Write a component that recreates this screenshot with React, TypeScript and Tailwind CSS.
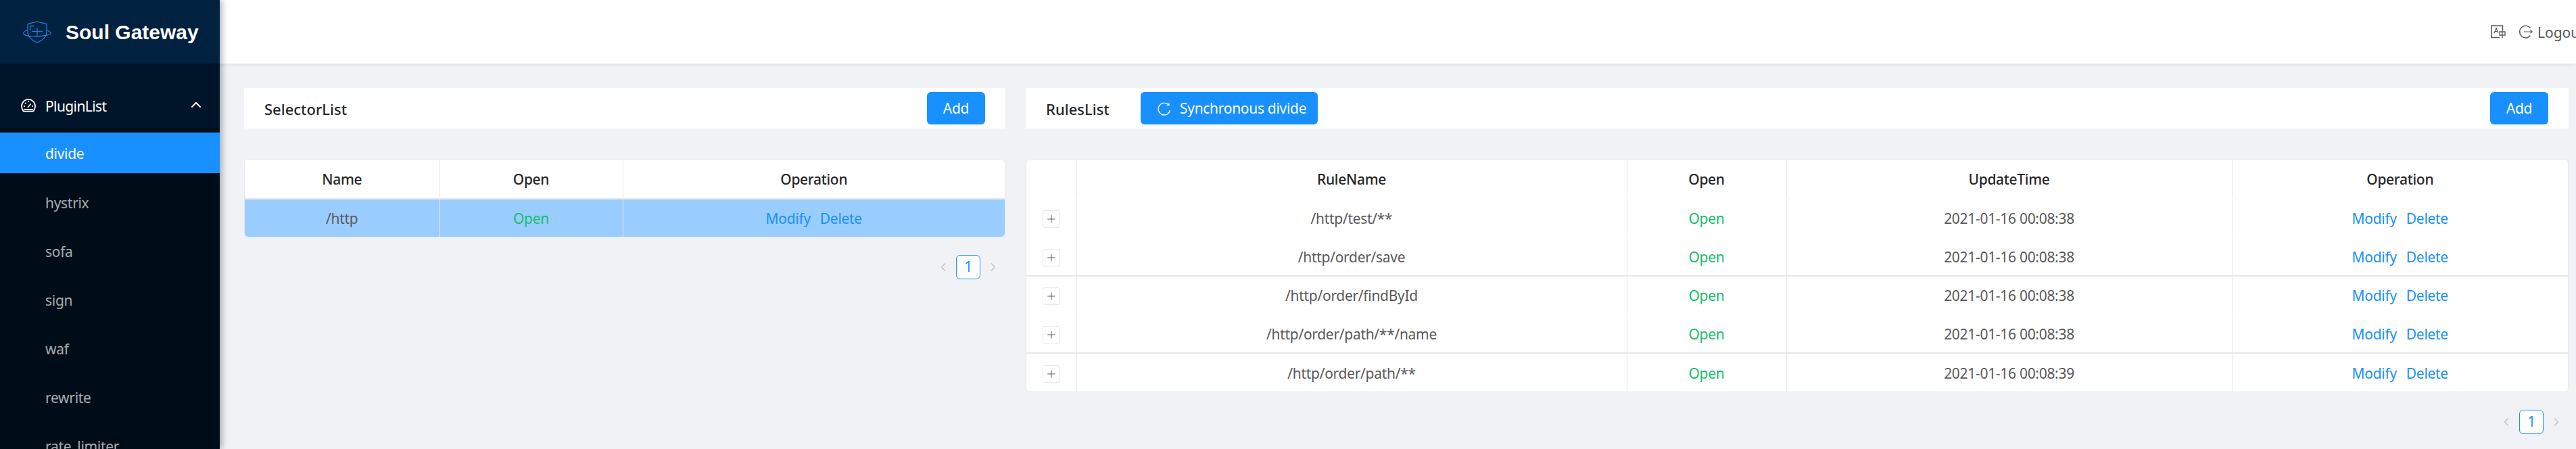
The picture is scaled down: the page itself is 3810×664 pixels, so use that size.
import { ReactNode } from 'react';
import { ChevronLeft, ChevronRight, ChevronUp, Plus } from 'lucide-react';

const plugins = ['hystrix', 'sofa', 'sign', 'waf', 'rewrite', 'rate_limiter'];

const rules = [
  { name: '/http/test/**', time: '2021-01-16 00:08:38', line: false },
  { name: '/http/order/save', time: '2021-01-16 00:08:38', line: true },
  { name: '/http/order/findById', time: '2021-01-16 00:08:38', line: false },
  { name: '/http/order/path/**/name', time: '2021-01-16 00:08:38', line: true },
  { name: '/http/order/path/**', time: '2021-01-16 00:08:39', line: false },
];

function Logo() {
  return (
    <svg width="42" height="33" viewBox="0 0 42 33" fill="none" stroke="#1a7fd8" strokeWidth="1.3" className="shrink-0">
      <path d="M21 .8 L35 4.5 V16 C35 24 28 29 21 32 C14 29 7 24 7 16 V4.5 Z" />
      <path d="M7 13 C2.5 15 .5 16.5 .7 18 C1.5 22 12 24 22 23 C33 22 41.5 20.5 41.3 18 C41 16.5 38.5 15 35 13.5" />
      <path d="M10.5 14 V7.5 H16.5 M21 10 V22 M13 15.5 H29" />
    </svg>
  );
}

function DashboardIcon() {
  return (
    <svg width="22" height="20" viewBox="0 0 22 20" fill="none" stroke="white" strokeWidth="1.7" className="shrink-0">
      <path d="M4 18.6 H18 C20 16.5 21 14 21 11 A10 10 0 0 0 1 11 C1 14 2 16.5 4 18.6 Z" />
      <path d="M11 3 V5 M4 11 H6 M16 11 H18 M6 6 L7.4 7.4 M10 13 L14.5 7.5 M4 15.8 H18" />
    </svg>
  );
}

function TranslateIcon() {
  return (
    <svg width="22" height="20" viewBox="0 0 22 20" fill="none" stroke="#595959" className="shrink-0">
      <path d="M13 18.5 H1 V1 H17.5 V8" strokeWidth="1.6" />
      <path d="M5 12 L8 4.5 L11 12 M6 9.5 H10" strokeWidth="1.2" />
      <path d="M13 10 H21 V15 H13 Z M17 7.5 V19" strokeWidth="1.3" />
    </svg>
  );
}

function LogoutIcon() {
  return (
    <svg width="22" height="20" viewBox="0 0 22 20" fill="none" stroke="#595959" strokeWidth="1.5" className="shrink-0">
      <path d="M17.5 4.2 A9 9 0 1 0 17.5 15.8" />
      <path d="M8 10 H20 M17.5 7.8 L20.2 10 L17.5 12.2" strokeWidth="1.2" />
    </svg>
  );
}

function ReloadIcon() {
  return (
    <svg width="20" height="20" viewBox="0 0 20 20" fill="none" stroke="white" strokeWidth="1.4" className="shrink-0">
      <path d="M16.6 4.4 A8.8 8.8 0 1 0 18.6 12" />
      <path d="M17 1.2 V5 H13.4" strokeWidth="1.2" />
    </svg>
  );
}

function Btn({ children, className }: { children: ReactNode; className: string }) {
  return (
    <button className={`flex h-12 shrink-0 items-center rounded-[6px] bg-[#1890ff] pt-[2px] text-[21px] text-white shadow-[0_3px_0_rgba(0,0,0,0.03)] ${className}`}>
      {children}
    </button>
  );
}

function Pager() {
  return (
    <div className="mt-[26px] flex items-center justify-end gap-[9px] pr-[8px] text-[#bfbfbf]">
      <ChevronLeft size={20} strokeWidth={1.6} />
      <span className="flex h-9 w-9 items-center justify-center rounded-[6px] border border-[#1890ff] bg-white text-[21px] text-[#1890ff]">
        1
      </span>
      <ChevronRight size={20} strokeWidth={1.6} />
    </div>
  );
}

function Actions() {
  return (
    <span className="text-[#1890ff]">
      Modify<span className="ml-[14px]">Delete</span>
    </span>
  );
}

export default function App() {
  return (
    <div className="flex h-[664px] w-[3810px] overflow-hidden bg-[#f0f2f5] font-['Noto_Sans',sans-serif] text-[21px] tracking-[-0.3px]">
      <aside className="relative z-20 w-[325px] shrink-0 overflow-hidden bg-[#001529] shadow-[3px_0_9px_rgba(0,21,41,0.35)]">
        <div className="flex h-[94px] items-center bg-[#002140] pl-[34px]">
          <Logo />
          <span className="ml-[21px] whitespace-nowrap font-['Liberation_Sans',sans-serif] text-[30px] font-bold tracking-normal text-white">
            Soul Gateway
          </span>
        </div>
        <div className="pb-1 pt-8">
          <div className="flex h-[60px] items-center pl-[31px] pr-[23px] text-white">
            <DashboardIcon />
            <span className="ml-[14px] flex-1 pt-[3px] tracking-[-0.6px]">PluginList</span>
            <ChevronUp size={24} strokeWidth={2} className="-mt-[3px]" />
          </div>
        </div>
        <div className="bg-[#000c17] pt-[6px]">
          <div className="flex h-[60px] items-center bg-[#1890ff] pl-[67px] pt-[3px] text-white">divide</div>
          <div className="pt-[13px]">
            {plugins.map((p) => (
              <div key={p} className="mb-3 flex h-[60px] items-center pl-[67px] pt-[3px] text-white/65">
                {p}
              </div>
            ))}
          </div>
        </div>
      </aside>

      <div className="min-w-0 flex-1">
        <header className="relative z-10 flex h-[94px] items-center overflow-hidden whitespace-nowrap bg-white pl-[3359px] text-[#595959] shadow-[0_2px_6px_rgba(0,21,41,0.08)]">
          <TranslateIcon />
          <span className="ml-[19px]">
            <LogoutIcon />
          </span>
          <span className="ml-[6px] pt-[3px] tracking-normal">Logout</span>
        </header>

        <main className="flex gap-[30px] pl-[36px] pr-[11px] pt-[36px]">
          <section className="w-[1126px] shrink-0">
            <div className="flex h-[60px] items-center justify-between bg-white px-[30px]">
              <h3 className="pt-[3px] text-[22px] font-medium tracking-normal text-[#262626]">SelectorList</h3>
              <Btn className="w-[86px] justify-center">Add</Btn>
            </div>
            <div className="mt-[45px] overflow-hidden rounded-[6px] border border-[#e8e8e8] bg-white">
              <table className="w-full table-fixed text-center">
                <thead>
                  <tr className="h-[58px] border-b-2 border-[#e8e8e8] text-[#262626]">
                    <th className="w-[288px] border-r border-[#e8e8e8] pt-[3px] font-medium">Name</th>
                    <th className="w-[271px] border-r border-[#e8e8e8] pt-[3px] font-medium">Open</th>
                    <th className="pt-[3px] font-medium">Operation</th>
                  </tr>
                </thead>
                <tbody>
                  <tr className="h-[56px] bg-[#99cdff] text-[#595959]">
                    <td className="border-r border-[#e8e8e8] pt-[3px]">/http</td>
                    <td className="border-r border-[#e8e8e8] pt-[3px] text-[#19be6b]">Open</td>
                    <td className="pt-[3px]">
                      <Actions />
                    </td>
                  </tr>
                </tbody>
              </table>
            </div>
            <Pager />
          </section>

          <section className="min-w-0 flex-1">
            <div className="flex h-[60px] items-center bg-white px-[30px]">
              <h3 className="w-[140px] shrink-0 pt-[3px] text-[22px] font-medium tracking-normal text-[#262626]">RulesList</h3>
              <div className="flex flex-1 justify-between">
                <Btn className="w-[262px] gap-[13px] pl-[25px]">
                  <ReloadIcon />
                  Synchronous divide
                </Btn>
                <Btn className="w-[86px] justify-center">Add</Btn>
              </div>
            </div>
            <div className="mt-[45px] overflow-hidden rounded-[6px] border border-[#e8e8e8] bg-white">
              <table className="w-full table-fixed text-center">
                <thead>
                  <tr className="h-[58px] border-b-2 border-white text-[#262626]">
                    <th className="w-[74px] border-r border-[#e8e8e8]"></th>
                    <th className="w-[814px] border-r border-[#e8e8e8] pt-[3px] font-medium">RuleName</th>
                    <th className="w-[236px] border-r border-[#e8e8e8] pt-[3px] font-medium">Open</th>
                    <th className="w-[659px] border-r border-[#e8e8e8] pt-[3px] font-medium">UpdateTime</th>
                    <th className="pt-[3px] font-medium">Operation</th>
                  </tr>
                </thead>
                <tbody>
                  {rules.map((r) => (
                    <tr
                      key={r.name}
                      className={
                        r.line
                          ? 'h-[57px] border-b-2 border-[#e8e8e8] text-[#595959] last:border-0'
                          : 'h-[57px] border-b-2 border-white text-[#595959] last:border-0'
                      }
                    >
                      <td className="border-r border-[#e8e8e8] pt-[3px]">
                        <span className="mx-auto flex h-[26px] w-[26px] items-center justify-center rounded-[3px] border border-[#e8e8e8] text-[#595959]">
                          <Plus size={18} strokeWidth={1.3} />
                        </span>
                      </td>
                      <td className="border-r border-[#e8e8e8] pt-[3px]">{r.name}</td>
                      <td className="border-r border-[#e8e8e8] pt-[3px] text-[#19be6b]">Open</td>
                      <td className="border-r border-[#e8e8e8] pt-[3px]">{r.time}</td>
                      <td className="pt-[3px]">
                        <Actions />
                      </td>
                    </tr>
                  ))}
                </tbody>
              </table>
            </div>
            <Pager />
          </section>
        </main>
      </div>
    </div>
  );
}
